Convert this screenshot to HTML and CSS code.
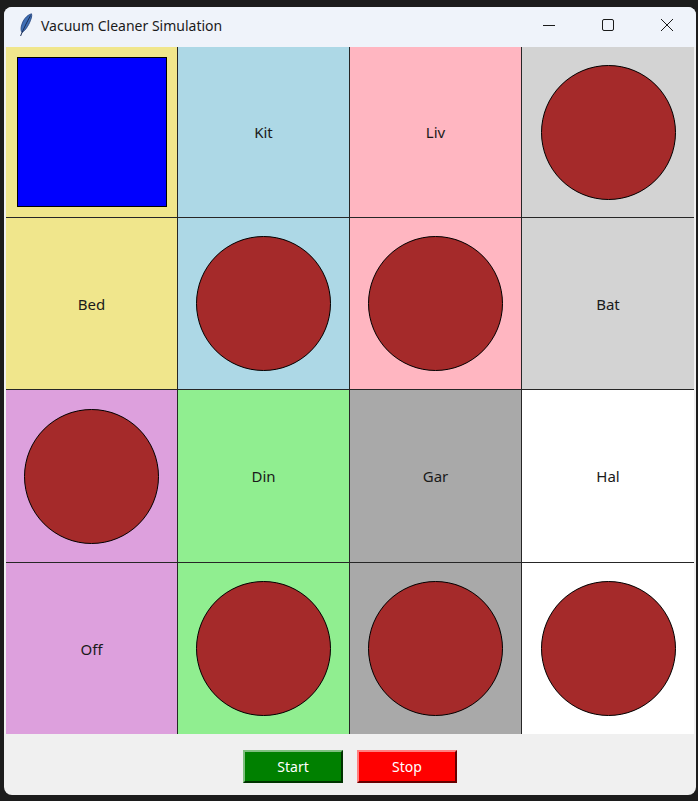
FILE: index.html
```html
<!DOCTYPE html>
<html lang="en">
<head>
    <meta charset="UTF-8">
    <meta name="viewport" content="width=device-width, initial-scale=1.0">
    <title>Vacuum Cleaner Simulation</title>
    <link rel="stylesheet" href="styles.css">
</head>
<body>

    <div class="window">
        <div class="titlebar">
            <svg class="app-icon" width="14" height="24" viewBox="0 0 14 24">
                <path d="M12.5 0.8 C8 2 3.5 7 2.2 14 C1.8 16.5 2.2 18.5 3 19.5 C7 17 10.5 11 12.3 5 C12.8 3.3 12.9 1.8 12.5 0.8 Z" fill="#3f6fb5" stroke="#1f3f78" stroke-width="0.8"/>
                <path d="M11.5 2.5 C8.5 8 5.5 14 3 19.5 L1.6 23" fill="none" stroke="#1c2f55" stroke-width="1"/>
            </svg>
            <span class="title">Vacuum Cleaner Simulation</span>
            <div class="controls">
                <svg class="ctl" width="14" height="14" viewBox="0 0 14 14"><path d="M1 7.5 H13" stroke="#1a1a1a" stroke-width="1"/></svg>
                <svg class="ctl" width="14" height="14" viewBox="0 0 14 14"><rect x="1.5" y="1.5" width="11" height="11" rx="1.5" fill="none" stroke="#1a1a1a" stroke-width="1"/></svg>
                <svg class="ctl" width="14" height="14" viewBox="0 0 14 14"><path d="M1 1 L13 13 M13 1 L1 13" stroke="#1a1a1a" stroke-width="1"/></svg>
            </div>
        </div>

        <div class="grid" id="grid"></div>

        <div class="bar">
            <button class="btn start">Start</button>
            <button class="btn stop">Stop</button>
        </div>
    </div>

    <script>
        const rooms = [
            { color: "#f0e68c", label: "Kit", vacuum: true },
            { color: "#add8e6", label: "Kit" },
            { color: "#ffb6c1", label: "Liv" },
            { color: "#d3d3d3", dirt: true },
            { color: "#f0e68c", label: "Bed" },
            { color: "#add8e6", dirt: true },
            { color: "#ffb6c1", dirt: true },
            { color: "#d3d3d3", label: "Bat" },
            { color: "#dda0dd", dirt: true },
            { color: "#90ee90", label: "Din" },
            { color: "#a9a9a9", label: "Gar" },
            { color: "#ffffff", label: "Hal" },
            { color: "#dda0dd", label: "Off" },
            { color: "#90ee90", dirt: true },
            { color: "#a9a9a9", dirt: true },
            { color: "#ffffff", dirt: true }
        ];

        const grid = document.getElementById("grid");
        rooms.forEach((room) => {
            const cell = document.createElement("div");
            cell.className = "cell";
            cell.style.background = room.color;
            if (room.vacuum) {
                cell.innerHTML = `<div class="vacuum"></div>`;
            } else if (room.dirt) {
                cell.innerHTML = `<div class="dirt"></div>`;
            } else {
                cell.innerHTML = `<span class="label">${room.label}</span>`;
            }
            grid.appendChild(cell);
        });
    </script>

</body>
</html>
```

FILE: styles.css
```css
body {
    margin: 0;
    background: #1c1c1c;
    font-family: "Noto Sans", "Open Sans", sans-serif;
}
.window {
    margin: 7px 0 0 4px;
    width: 692px;
    height: 788px;
    background: #f0f0f0;
    border-radius: 8px;
    overflow: hidden;
    box-sizing: border-box;
    padding: 0 2px;
}
.titlebar {
    height: 40px;
    box-sizing: border-box;
    margin: 0 -2px;
    padding-left: 15px;
    padding-bottom: 4px;
    background: #eff3fa;
    display: flex;
    align-items: center;
}
.app-icon {
    margin-right: 8px;
}
.title {
    font-size: 14px;
    color: #1a1a1a;
}
.controls {
    margin-left: auto;
    display: flex;
    align-items: center;
}
.ctl {
    margin-left: 45px;
}
.ctl:last-child {
    margin-right: 22px;
}
.grid {
    display: grid;
    grid-template-columns: 171px 171px 171px 172px;
    grid-template-rows: 170px 171px 172px 171px;
    gap: 1px;
    background: #262626;
    width: 688px;
}
.cell {
    display: flex;
    align-items: center;
    justify-content: center;
}
.label {
    font-size: 15px;
    color: #1a1a1a;
}
.dirt {
    width: 135px;
    height: 135px;
    box-sizing: border-box;
    border-radius: 50%;
    background: #a52a2a;
    border: 1px solid #000;
}
.vacuum {
    width: 150px;
    height: 150px;
    box-sizing: border-box;
    background: #0000ff;
    border: 1px solid #000;
}
.bar {
    display: flex;
    justify-content: center;
    gap: 14px;
    padding-top: 16px;
}
.btn {
    width: 100px;
    height: 33px;
    font-family: "Noto Sans", "Open Sans", sans-serif;
    font-size: 14px;
    color: white;
    border: 2px solid;
    padding: 0;
    cursor: pointer;
}
.start {
    background: #008000;
    border-color: #7fbf7f #003300 #003300 #7fbf7f;
}
.stop {
    background: #ff0000;
    border-color: #ff8080 #660000 #660000 #ff8080;
}
```
